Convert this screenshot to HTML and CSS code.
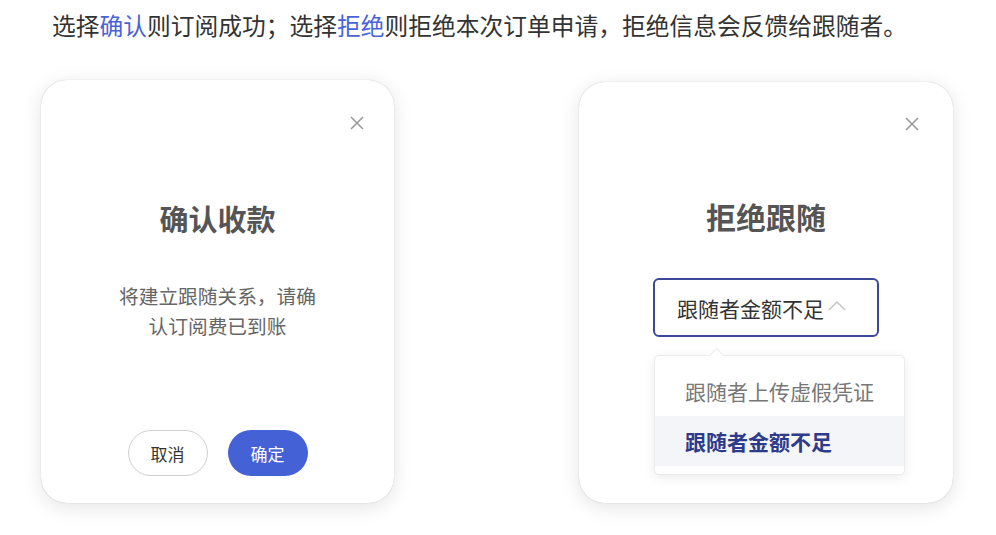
FILE: index.html
```html
<!DOCTYPE html>
<html lang="zh-CN">
<head>
<meta charset="utf-8">
<link rel="stylesheet" href="styles.css">
</head>
<body>
<p class="intro">选择<span class="link">确认</span>则订阅成功；选择<span class="link">拒绝</span>则拒绝本次订单申请，拒绝信息会反馈给跟随者。</p>
<div class="row">
  <div class="card card-left">
    <div class="close-row">
      <svg class="close" width="14" height="14" viewBox="0 0 14 14"><path d="M1 1L13 13M13 1L1 13" stroke="#9a9a9a" stroke-width="1.6" fill="none"/></svg>
    </div>
    <div class="title title-left">确认收款</div>
    <div class="desc">将建立跟随关系，请确<br>认订阅费已到账</div>
    <div class="actions">
      <button class="btn btn-cancel">取消</button>
      <button class="btn btn-ok">确定</button>
    </div>
  </div>
  <div class="card card-right">
    <div class="close-row">
      <svg class="close" width="14" height="14" viewBox="0 0 14 14"><path d="M1 1L13 13M13 1L1 13" stroke="#9a9a9a" stroke-width="1.6" fill="none"/></svg>
    </div>
    <div class="title title-right">拒绝跟随</div>
    <div class="select">
      <span>跟随者金额不足</span>
      <svg class="chev" width="18" height="10" viewBox="0 0 18 10"><path d="M1 9L9 1L17 9" stroke="#c4c4c4" stroke-width="1.5" fill="none"/></svg>
    </div>
    <div class="dropdown">
      <div class="item">跟随者上传虚假凭证</div>
      <div class="item item-active">跟随者金额不足</div>
    </div>
  </div>
</div>
</body>
</html>
```
FILE: styles.css
```css
* { box-sizing: border-box; }
body {
  margin: 0;
  background: #fff;
  font-family: "Noto Sans CJK SC", "Noto Sans", sans-serif;
  width: 996px;
  height: 535px;
  overflow: hidden;
}
.intro {
  margin: 0;
  padding: 8px 0 0 52px;
  font-size: 23.75px;
  line-height: 33px;
  color: #333;
}
.link { color: #4a63d8; }
.row {
  display: flex;
  align-items: flex-start;
  padding-left: 41px;
  margin-top: 39px;
  gap: 185px;
}
.card {
  position: relative;
  background: #fff;
  border-radius: 26px;
  box-shadow: 0 0 1px rgba(0,0,0,0.28), 0 4px 20px rgba(0,0,0,0.11);
  display: flex;
  flex-direction: column;
  align-items: center;
}
.card-left { width: 353px; height: 423px; }
.card-right { width: 374px; height: 421px; margin-top: 2px; }
.close-row {
  align-self: stretch;
  display: flex;
  justify-content: flex-end;
  padding: 36px 30px 0 0;
  height: 50px;
}
.card-right .close-row { padding-right: 34px; padding-top: 35px; }
.close { display: block; }
.title {
  font-weight: 700;
  color: #555;
  line-height: 40px;
}
.title-left { font-size: 29px; margin-top: 68px; }
.title-right { font-size: 30px; margin-top: 64px; }
.desc {
  margin-top: 43px;
  font-size: 19.7px;
  line-height: 30px;
  color: #666;
  text-align: center;
}
.actions {
  margin-top: auto;
  margin-bottom: 27px;
  display: flex;
  gap: 20px;
}
.btn {
  width: 80px;
  height: 46px;
  border-radius: 23px;
  font-family: inherit;
  font-size: 17px;
  padding: 0;
  cursor: pointer;
}
.btn-cancel { background: #fff; border: 1.5px solid #d0d0d0; color: #333; }
.btn-ok { background: #4461d6; border: none; color: #fff; }
.select {
  margin-top: 42px;
  width: 226px;
  height: 59px;
  border: 2px solid #3c4897;
  border-radius: 6px;
  display: flex;
  align-items: center;
  padding-left: 22px;
  gap: 4px;
  font-size: 21px;
  color: #333;
}
.chev { margin-top: -3px; }
.dropdown {
  position: absolute;
  left: 75px;
  top: 273px;
  width: 251px;
  height: 120px;
  background: #fff;
  border: 1px solid #ebebeb;
  border-radius: 5px;
  box-shadow: 0 3px 12px rgba(0,0,0,0.08);
  padding: 10px 0;
}
.dropdown::before {
  content: "";
  position: absolute;
  left: 56px;
  top: -6px;
  width: 10px;
  height: 10px;
  background: #fff;
  border-left: 1px solid #ebebeb;
  border-top: 1px solid #ebebeb;
  transform: rotate(45deg);
}
.item {
  height: 50px;
  display: flex;
  align-items: center;
  padding-left: 30px;
  font-size: 21px;
  color: #777;
}
.item-active {
  background: #f4f5f9;
  color: #2e3a8a;
  font-weight: 700;
}
```
